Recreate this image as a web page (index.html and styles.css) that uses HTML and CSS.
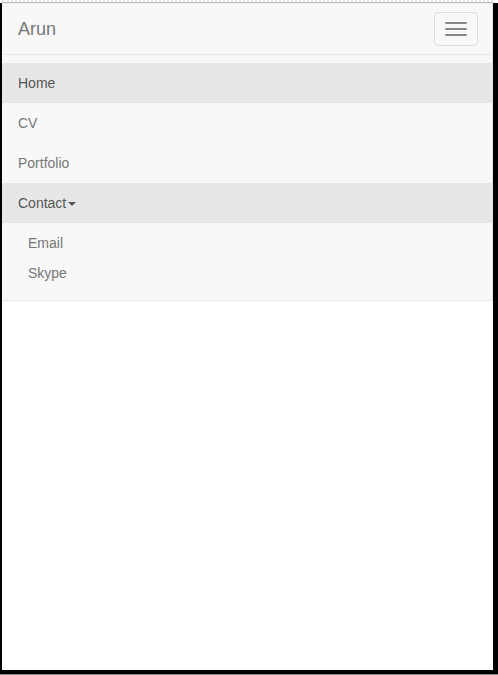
FILE: index.html
```html
<!DOCTYPE html>
<html>
<head>
<meta charset="utf-8">
<link rel="stylesheet" href="styles.css">
</head>
<body>
<div class="topstrip"></div>
<div class="frame">
  <nav class="navbar">
    <div class="navbar-header">
      <a class="brand" href="#">Arun</a>
      <button class="toggle" type="button" aria-label="Toggle navigation">
        <span class="bar"></span><span class="bar"></span><span class="bar"></span>
      </button>
    </div>
    <div class="collapse">
      <ul class="nav">
        <li class="active"><a href="#">Home</a></li>
        <li><a href="#">CV</a></li>
        <li><a href="#">Portfolio</a></li>
        <li class="open"><a href="#">Contact<span class="caret"></span></a>
          <ul class="dropdown">
            <li><a href="#">Email</a></li>
            <li><a href="#">Skype</a></li>
          </ul>
        </li>
      </ul>
    </div>
  </nav>
</div>
<div class="bottomstrip"></div>
</body>
</html>
```
FILE: styles.css
```css
* { box-sizing: border-box; }
html, body { margin: 0; padding: 0; }
body {
  width: 498px;
  height: 675px;
  background: #fff;
  font-family: "Liberation Sans", Arial, Helvetica, sans-serif;
  font-size: 14px;
  line-height: 20px;
  color: #333;
  overflow: hidden;
}
.topstrip {
  height: 3px;
  margin-left: 2px;
  margin-right: 5px;
  border-top: 2px dotted #e4e4e4;
  border-bottom: 1px solid #bdbdbd;
}
.frame {
  width: 498px;
  height: 671px;
  border-left: 2px solid #000;
  border-right: 5px solid #000;
  border-bottom: 4px solid #000;
  background: #fff;
}
.bottomstrip {
  height: 1px;
  background: #888;
}
.navbar {
  background: #f8f8f8;
  border-top: 1px solid #eeeeee;
  border-bottom: 1px solid #e7e7e7;
  border-right: 1px solid #e7e7e7;
}
.navbar-header {
  height: 50px;
  display: flex;
  align-items: center;
  justify-content: space-between;
  padding: 0 15px;
}
.brand {
  font-size: 18px;
  line-height: 20px;
  color: #777;
  text-decoration: none;
  padding-left: 1px;
}
.toggle {
  width: 44px;
  height: 34px;
  padding: 9px 10px;
  border: 1px solid #ddd;
  border-radius: 4px;
  background: transparent;
  display: flex;
  flex-direction: column;
  justify-content: space-between;
  margin-right: -1px;
}
.bar {
  display: block;
  width: 22px;
  height: 2px;
  border-radius: 1px;
  background: #888;
}
.collapse {
  border-top: 1px solid #e7e7e7;
  padding: 7.5px 0;
}
.nav, .dropdown {
  list-style: none;
  margin: 0;
  padding: 0;
}
.nav > li > a {
  display: block;
  padding: 10px 16px;
  color: #777;
  text-decoration: none;
}
.nav > li.active > a,
.nav > li.open > a {
  background: #e7e7e7;
  color: #555;
}
.caret {
  display: inline-block;
  width: 0;
  height: 0;
  margin-left: 2px;
  vertical-align: middle;
  border-top: 4px solid #555;
  border-left: 4px solid transparent;
  border-right: 4px solid transparent;
}
.dropdown {
  padding: 5px 0;
}
.dropdown a {
  display: block;
  padding: 5px 15px 5px 26px;
  color: #777;
  text-decoration: none;
}
```
